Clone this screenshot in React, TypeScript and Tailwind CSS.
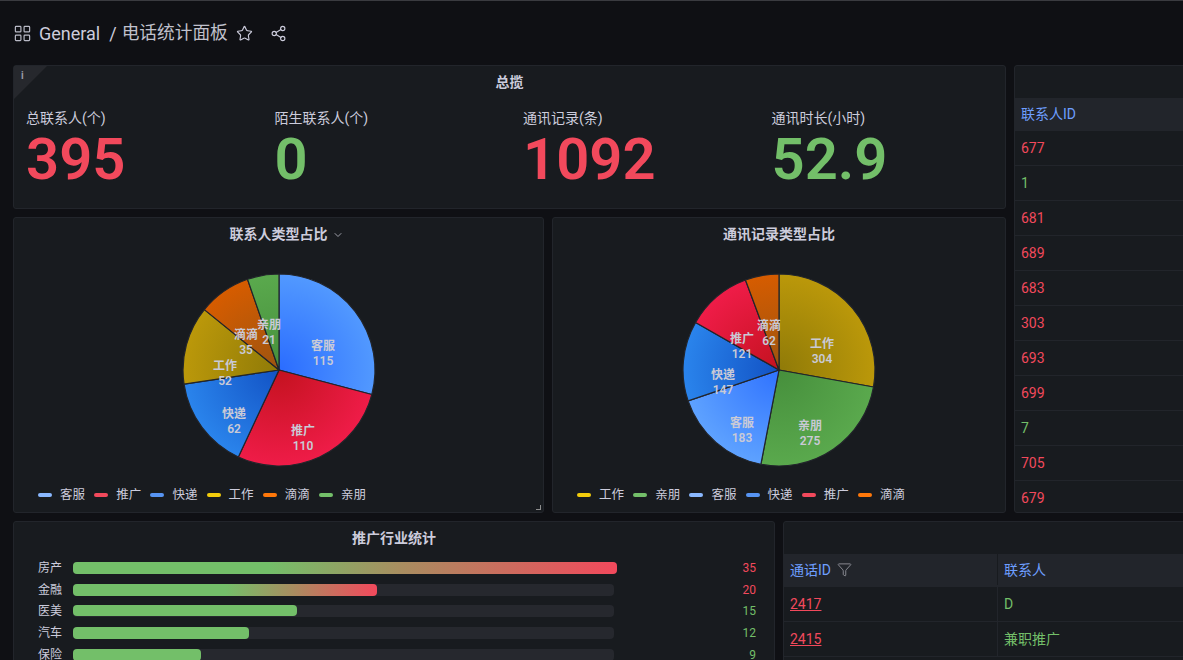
import { ChevronDown, Filter, LayoutGrid, Share2, Star } from 'lucide-react';

const RED = '#f2495c';
const GREEN = '#73bf69';

type Slice = { name: string; value: number; grad: string; lx: number; ly: number };

const GRADS: Record<string, [string, string]> = {
  blue: ['#2a6cff', '#5299ff'],
  lightBlue: ['#2f72ff', '#5ea2ff'],
  darkBlue: ['#1252c4', '#2a84ec'],
  red: ['#c4121f', '#ef1c48'],
  yellow: ['#8f7a08', '#bb980a'],
  orange: ['#9c5410', '#d65c00'],
  green: ['#468f3c', '#5aa94d'],
};

const LEFT_PIE: Slice[] = [
  { name: '客服', value: 115, grad: 'blue', lx: 44, ly: -20 },
  { name: '推广', value: 110, grad: 'red', lx: 24, ly: 65 },
  { name: '快递', value: 62, grad: 'darkBlue', lx: -45, ly: 48 },
  { name: '工作', value: 52, grad: 'yellow', lx: -54, ly: 0 },
  { name: '滴滴', value: 35, grad: 'orange', lx: -33, ly: -31 },
  { name: '亲朋', value: 21, grad: 'green', lx: -10, ly: -41 },
];

const RIGHT_PIE: Slice[] = [
  { name: '工作', value: 304, grad: 'yellow', lx: 43, ly: -22 },
  { name: '亲朋', value: 275, grad: 'green', lx: 31, ly: 60 },
  { name: '客服', value: 183, grad: 'lightBlue', lx: -37, ly: 57 },
  { name: '快递', value: 147, grad: 'darkBlue', lx: -56, ly: 9 },
  { name: '推广', value: 121, grad: 'red', lx: -37, ly: -27 },
  { name: '滴滴', value: 62, grad: 'orange', lx: -10, ly: -40 },
];

const LEFT_LEGEND = [
  ['客服', '#8ab8ff'],
  ['推广', RED],
  ['快递', '#5794f2'],
  ['工作', '#f2cc0c'],
  ['滴滴', '#ff780a'],
  ['亲朋', GREEN],
];

const RIGHT_LEGEND = [
  ['工作', '#f2cc0c'],
  ['亲朋', GREEN],
  ['客服', '#8ab8ff'],
  ['快递', '#5794f2'],
  ['推广', RED],
  ['滴滴', '#ff780a'],
];

const STATS = [
  { label: '总联系人(个)', value: '395', color: 'text-[#f2495c]' },
  { label: '陌生联系人(个)', value: '0', color: 'text-[#73bf69]' },
  { label: '通讯记录(条)', value: '1092', color: 'text-[#f2495c]' },
  { label: '通讯时长(小时)', value: '52.9', color: 'text-[#73bf69]' },
];

const BARS = [
  { name: '房产', value: 35, width: 544, h: 'h-3', fill: 'linear-gradient(90deg,#73bf69 0%,#73bf69 36%,#a88e60 60%,#f2495c 100%)' },
  { name: '金融', value: 20, width: 304, h: 'h-3', fill: 'linear-gradient(90deg,#73bf69 0%,#73bf69 50%,#a88e60 72%,#f2495c 100%)' },
  { name: '医美', value: 15, width: 224, h: 'h-[11px]', fill: GREEN },
  { name: '汽车', value: 12, width: 176, h: 'h-3', fill: GREEN },
  { name: '保险', value: 9, width: 128, h: 'h-3', fill: GREEN },
];

const CONTACT_IDS = [677, 1, 681, 689, 683, 303, 693, 699, 7, 705, 679];

function Pie({ slices }: { slices: Slice[] }) {
  const total = slices.reduce((sum, s) => sum + s.value, 0);
  let angle = -Math.PI / 2;
  const r = 96;
  return (
    <svg width="200" height="200" viewBox="-100 -100 200 200" className="block">
      <defs>
        {Object.entries(GRADS).map(([key, [inner, outer]]) => (
          <radialGradient key={key} id={`g-${key}-${total}`} gradientUnits="userSpaceOnUse" cx="0" cy="0" r={r}>
            <stop offset="0%" stopColor={inner} />
            <stop offset="100%" stopColor={outer} />
          </radialGradient>
        ))}
      </defs>
      {slices.map((s) => {
        const a0 = angle;
        const a1 = angle + (s.value / total) * Math.PI * 2;
        angle = a1;
        const large = a1 - a0 > Math.PI ? 1 : 0;
        const d = `M0 0L${r * Math.cos(a0)} ${r * Math.sin(a0)}A${r} ${r} 0 ${large} 1 ${r * Math.cos(a1)} ${r * Math.sin(a1)}Z`;
        return <path key={s.name} d={d} fill={`url(#g-${s.grad}-${total})`} stroke="#22252b" strokeWidth="1.2" strokeLinejoin="round" />;
      })}
      {slices.map((s) => (
        <text key={s.name} textAnchor="middle" fontSize="12" fontWeight="600" fill="#c9cad6">
          <tspan x={s.lx} y={s.ly}>{s.name}</tspan>
          <tspan x={s.lx} y={s.ly + 15}>{s.value}</tspan>
        </text>
      ))}
    </svg>
  );
}

function Legend({ items }: { items: string[][] }) {
  return (
    <div className="flex gap-[9.2px] pl-6 text-[12.5px] leading-4 text-[#ccccdc]">
      {items.map(([name, color]) => (
        <div key={name} className="flex items-center gap-2">
          <span className="block h-1 w-[14px] rounded-sm" style={{ backgroundColor: color }} />
          <span>{name}</span>
        </div>
      ))}
    </div>
  );
}

function PiePanel({ title, width, slices, legend, menu }: { title: string; width: string; slices: Slice[]; legend: string[][]; menu?: boolean }) {
  return (
    <section className={`relative flex flex-col rounded-[3px] border border-[#22252b] bg-[#181b1f] ${width}`}>
      <h2 className="flex h-8 items-center justify-center text-sm font-semibold text-[#ccccdc]">
        <span className="relative">
          {title}
          {menu && <ChevronDown size={12} className="absolute left-[102px] top-[5px] text-[#9d9ea8]" />}
        </span>
      </h2>
      <div className="flex justify-center pt-5">
        <Pie slices={slices} />
      </div>
      <div className="mt-[17px]">
        <Legend items={legend} />
      </div>
      {menu && <span className="absolute bottom-[2px] right-[2px] h-[5px] w-[5px] border-b border-r border-[#8e8e8e]" />}
    </section>
  );
}

export default function App() {
  return (
    <div
      className="h-[660px] w-[1183px] overflow-hidden border-t border-[#3a3b40] bg-[#0f1014] pl-[13px] text-[#ccccdc]"
      style={{ fontFamily: 'Roboto, "Noto Sans CJK SC", sans-serif' }}
    >
      {/* Top bar */}
      <header className="flex h-16 items-center text-[#ccccdc]">
        <LayoutGrid size={19} strokeWidth={1.5} className="text-[#b9bac6]" />
        <span className="ml-[7px] text-[18px] font-normal">General</span>
        <span className="ml-[9px] text-[18px] font-normal">/</span>
        <span className="ml-[5px] text-[17.7px] text-[#c0c1cc]">电话统计面板</span>
        <Star size={17} strokeWidth={1.6} className="ml-2" />
        <Share2 size={17} strokeWidth={1.6} className="ml-[17px]" />
      </header>

      <div className="flex gap-2">
        <div className="flex w-[993px] shrink-0 flex-col gap-2">
          {/* Overview stats */}
          <section className="relative h-[144px] rounded-[3px] border border-[#22252b] bg-[#181b1f]">
            <span className="absolute left-0 top-0 h-[33px] w-[33px] bg-[#26282d] [clip-path:polygon(0_0,100%_0,0_100%)]" />
            <span className="absolute left-[7px] top-[4px] text-[10px] font-bold leading-3 text-[#9d9ea8]">i</span>
            <h2 className="flex h-8 items-center justify-center text-sm font-semibold">总揽</h2>
            <div className="mt-[10px] grid grid-cols-[248.5px_248.5px_248.5px_1fr] pl-3">
              {STATS.map((s) => (
                <div key={s.label}>
                  <div className="text-sm leading-5 text-[#ccccdc]">{s.label}</div>
                  <div className={`text-[58px] font-semibold leading-[63px] ${s.color}`}>{s.value}</div>
                </div>
              ))}
            </div>
          </section>

          {/* Pie charts */}
          <div className="flex h-[296px] gap-2">
            <PiePanel title="联系人类型占比" width="w-[531px]" slices={LEFT_PIE} legend={LEFT_LEGEND} menu />
            <PiePanel title="通讯记录类型占比" width="flex-1" slices={RIGHT_PIE} legend={RIGHT_LEGEND} />
          </div>
        </div>

        {/* Contact table */}
        <section className="h-[448px] w-[400px] shrink-0 overflow-hidden rounded-[3px] border border-[#22252b] bg-[#181b1f]">
          <div className="h-8" />
          <div className="flex h-[33px] items-center bg-[#22252b] px-[6px] pb-[1px] text-sm text-[#6e9fff]">联系人ID</div>
          {CONTACT_IDS.map((id) => (
            <div
              key={id}
              className={`flex h-[35px] items-center border-b border-[#22252b] px-[6px] text-sm ${id === 1 || id === 7 ? 'text-[#73bf69]' : 'text-[#f2495c]'}`}
            >
              {id}
            </div>
          ))}
        </section>
      </div>

      <div className="mt-2 flex gap-2">
        {/* Promotion industries */}
        <section className="h-[300px] w-[762px] shrink-0 rounded-[3px] border border-[#22252b] bg-[#181b1f]">
          <h2 className="flex h-8 items-center justify-center text-sm font-semibold">推广行业统计</h2>
          <div className="mt-2 flex flex-col gap-[9.7px] pr-[18px]">
            {BARS.map((b) => (
              <div key={b.name} className="flex h-3 items-center text-xs">
                <span className="w-[48px] text-right text-[#ccccdc]">{b.name}</span>
                <div className="relative ml-[11px] h-3 w-[541px] rounded-sm bg-[#26282e]">
                  <div className={`absolute left-0 top-0 rounded-sm ${b.h}`} style={{ width: b.width, background: b.fill }} />
                </div>
                <span className={`ml-auto text-xs ${b.value >= 20 ? 'text-[#f2495c]' : 'text-[#73bf69]'}`}>{b.value}</span>
              </div>
            ))}
          </div>
        </section>

        {/* Call table */}
        <section className="h-[300px] w-[600px] shrink-0 overflow-hidden rounded-[3px] border border-[#22252b] bg-[#181b1f]">
          <div className="h-8" />
          <div className="grid h-[33px] grid-cols-[214px_1fr] bg-[#22252b] pb-[2px] text-sm text-[#6e9fff]">
            <div className="flex items-center gap-[6px] border-r border-[#181b1f] px-[6px]">
              通话ID
              <Filter size={15} strokeWidth={1.5} className="text-[#8e8f98]" />
            </div>
            <div className="flex items-center px-[6px]">联系人</div>
          </div>
          {[
            ['2417', 'D'],
            ['2415', '兼职推广'],
          ].map(([id, name]) => (
            <div key={id} className="grid h-[35px] grid-cols-[214px_1fr] border-b border-[#22252b] text-sm">
              <div className="flex items-center border-r border-[#22252b] px-[6px] text-[#f2495c] underline">{id}</div>
              <div className="flex items-center px-[6px] text-[#73bf69]">{name}</div>
            </div>
          ))}
        </section>
      </div>
    </div>
  );
}
